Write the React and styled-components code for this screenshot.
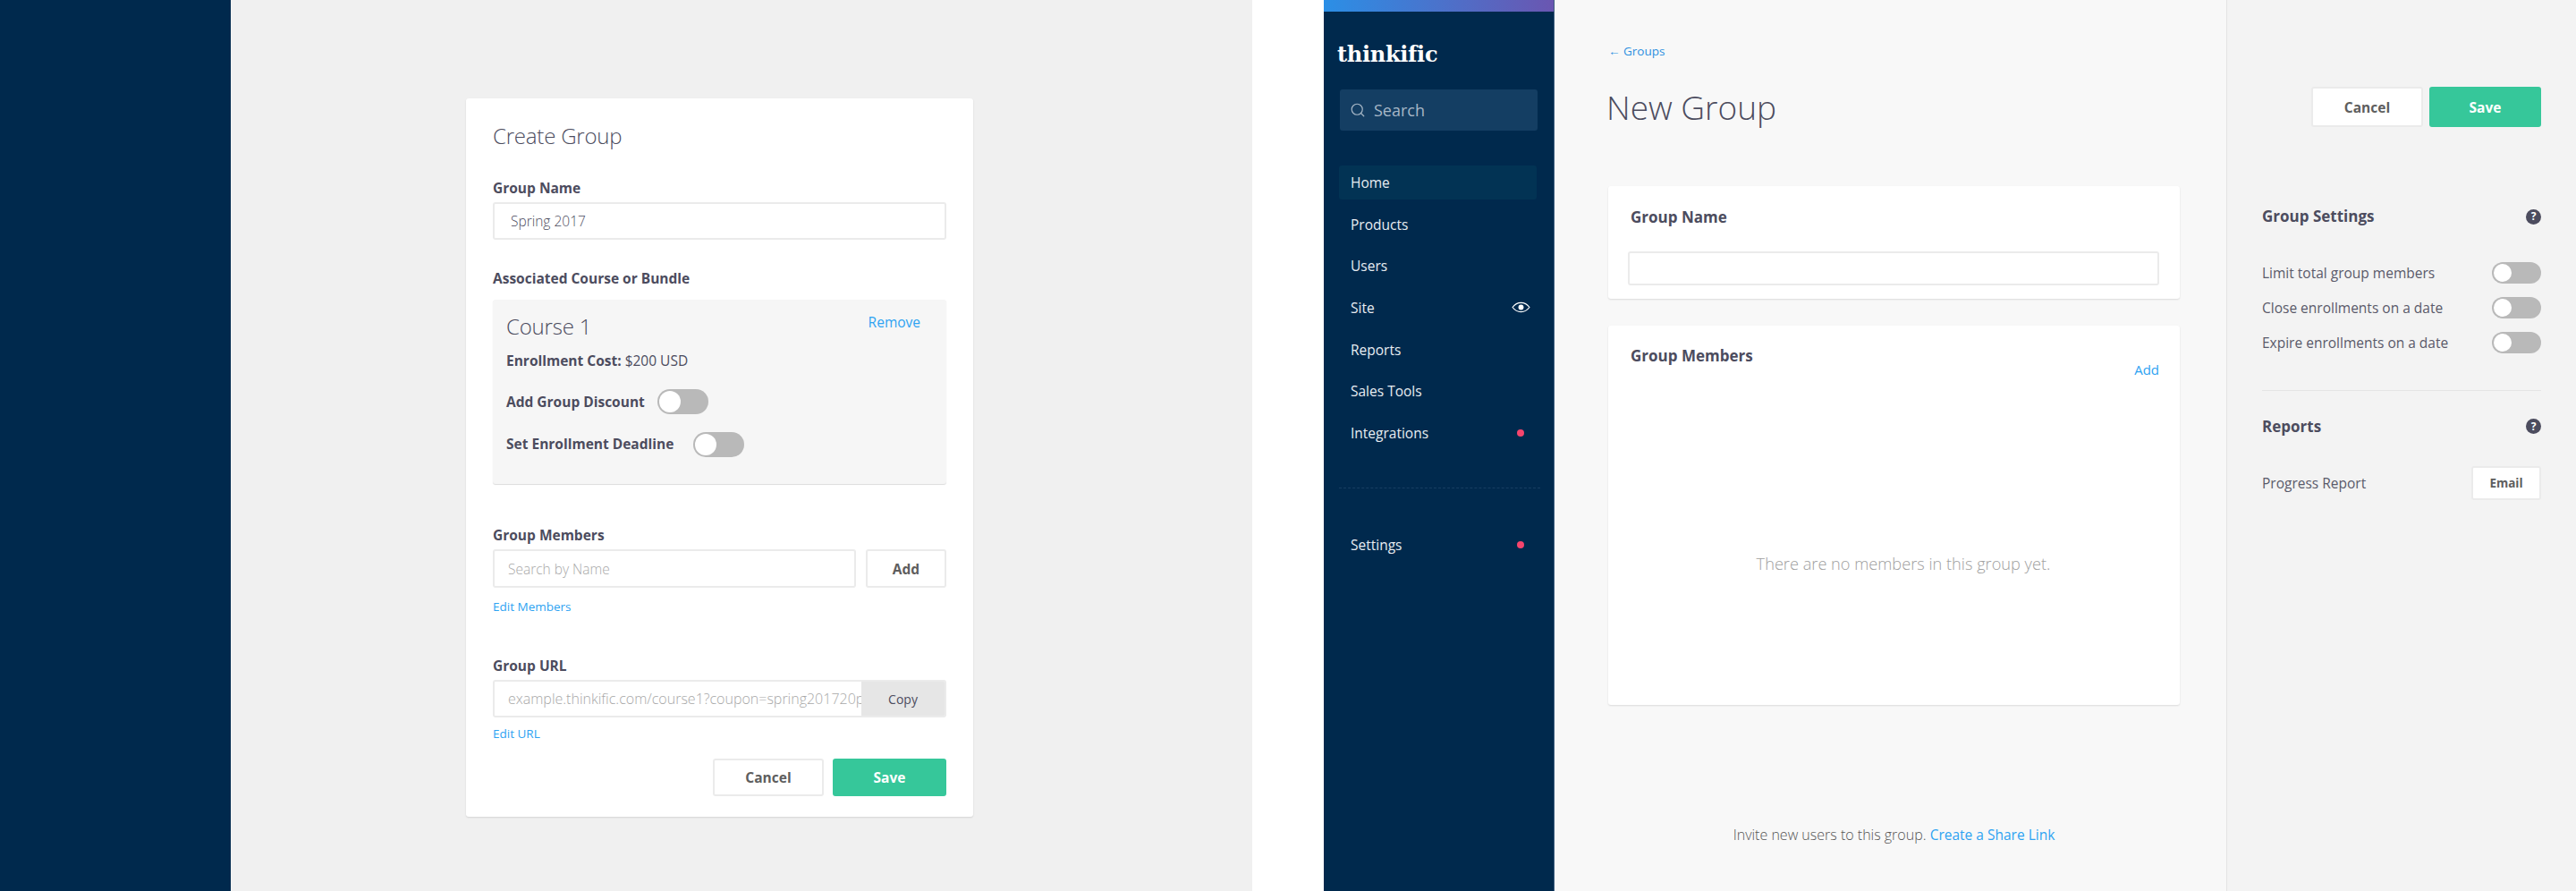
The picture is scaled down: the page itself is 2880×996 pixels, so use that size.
import styled, { createGlobalStyle } from "styled-components";
import { Search } from "lucide-react";

const GlobalStyle = createGlobalStyle`
  html, body {
    margin: 0;
    padding: 0;
    background: #ffffff;
    font-family: "Open Sans", "Liberation Sans", sans-serif;
    color: #4c4c5e;
  }
  * { box-sizing: border-box; }
`;

const navItems = [
  { label: "Home", active: true },
  { label: "Products" },
  { label: "Users" },
  { label: "Site", eye: true },
  { label: "Reports" },
  { label: "Sales Tools" },
  { label: "Integrations", dot: true },
];

const settings = [
  "Limit total group members",
  "Close enrollments on a date",
  "Expire enrollments on a date",
];

export default function App() {
  return (
    <>
      <GlobalStyle />
      <Page>
        <Modal>
          <NavyStrip />
          <ModalStage>
            <Card>
              <CardTitle>Create Group</CardTitle>
              <Label $mt={32}>Group Name</Label>
              <Field $mt={6} $h={42}>
                <FieldText>Spring 2017</FieldText>
              </Field>
              <Label $mt={33}>Associated Course or Bundle</Label>
              <CourseBox>
                <CourseHead>
                  <CourseName>Course 1</CourseName>
                  <RemoveLink>Remove</RemoveLink>
                </CourseHead>
                <Cost>
                  <b>Enrollment Cost:</b> $200 USD
                </Cost>
                <OptionRow $mt={22} $gap={14}>
                  <OptionLabel>Add Group Discount</OptionLabel>
                  <Toggle $w={57} $h={28} />
                </OptionRow>
                <OptionRow $mt={20} $gap={22}>
                  <OptionLabel $lift={3}>Set Enrollment Deadline</OptionLabel>
                  <Toggle $w={57} $h={28} />
                </OptionRow>
              </CourseBox>
              <Label $mt={47}>Group Members</Label>
              <AddRow>
                <Field $h={43} $grow>
                  <FieldText $muted>Search by Name</FieldText>
                </Field>
                <AddButton>Add</AddButton>
              </AddRow>
              <SmallLink $mt={12}>Edit Members</SmallLink>
              <Label $mt={47}>Group URL</Label>
              <Field $mt={6} $h={42}>
                <UrlText>example.thinkific.com/course1?coupon=spring201720p</UrlText>
                <CopyButton>Copy</CopyButton>
              </Field>
              <SmallLink $mt={9}>Edit URL</SmallLink>
              <CardActions>
                <Button $w={124} $h={42}>Cancel</Button>
                <Button $w={127} $h={42} $primary>Save</Button>
              </CardActions>
            </Card>
          </ModalStage>
        </Modal>

        <Gutter />

        <Sidebar>
          <GradientBar />
          <Logo>thinkific</Logo>
          <SearchBox>
            <Search size={18} strokeWidth={1.6} color="#a6b6c6" />
            <span>Search</span>
          </SearchBox>
          <Nav>
            {navItems.map((item) => (
              <NavItem key={item.label} $active={item.active}>
                <span>{item.label}</span>
                {item.eye && <EyeIcon />}
                {item.dot && <Dot />}
              </NavItem>
            ))}
          </Nav>
          <NavDivider />
          <NavItem>
            <span>Settings</span>
            <Dot />
          </NavItem>
        </Sidebar>

        <Main>
          <BackLink>← Groups</BackLink>
          <PageTitle>New Group</PageTitle>
          <Panel $mt={63}>
            <PanelLabel>Group Name</PanelLabel>
            <Field $mt={26} $h={38} />
          </Panel>
          <MembersPanel>
            <MembersHead>
              <PanelLabel>Group Members</PanelLabel>
              <AddLink>Add</AddLink>
            </MembersHead>
            <EmptyText>There are no members in this group yet.</EmptyText>
          </MembersPanel>
          <Invite>
            Invite new users to this group. <a>Create a Share Link</a>
          </Invite>
        </Main>

        <Aside>
          <AsideActions>
            <Button $w={125} $h={45}>Cancel</Button>
            <Button $w={125} $h={45} $primary>Save</Button>
          </AsideActions>
          <AsideHead $mt={88}>
            Group Settings
            <Help>?</Help>
          </AsideHead>
          <SettingList>
            {settings.map((s) => (
              <SettingRow key={s}>
                {s}
                <Toggle $w={55} $h={24} />
              </SettingRow>
            ))}
          </SettingList>
          <AsideDivider />
          <AsideHead $mt={28}>
            Reports
            <Help>?</Help>
          </AsideHead>
          <ReportRow>
            Progress Report
            <EmailButton>Email</EmailButton>
          </ReportRow>
        </Aside>
      </Page>
    </>
  );
}

function EyeIcon() {
  return (
    <EyeSvg viewBox="0 0 20 12" width="21" height="13">
      <path
        d="M1 6c2.400-3.200 5.400-4.900 9-4.900s6.600 1.700 9 4.900c-2.400 3.200-5.400 4.900-9 4.900S3.400 9.200 1 6z"
        fill="none"
        stroke="#ffffff"
        strokeWidth="1.100"
      />
      <circle cx="10" cy="6" r="2.800" fill="#ffffff" />
    </EyeSvg>
  );
}

const Page = styled.div`
  display: flex;
  width: 2880px;
  height: 996px;
  overflow: hidden;
`;

const Modal = styled.section`
  display: flex;
  width: 1400px;
  flex-shrink: 0;
`;

const NavyStrip = styled.div`
  width: 258px;
  background: #00294d;
`;

const ModalStage = styled.div`
  flex: 1;
  background: #f0f0f0;
  padding: 110px 0 0 263px;
`;

const Card = styled.div`
  width: 567px;
  height: 803px;
  padding: 26px 30px 0;
  background: #ffffff;
  border-radius: 3px;
  box-shadow: 0 1px 2px rgba(0, 0, 0, 0.12);
`;

const CardTitle = styled.h2`
  margin: 0;
  font-size: 24px;
  line-height: 32px;
  font-weight: 300;
  letter-spacing: -0.200px;
  color: #4c4c5e;
`;

const Label = styled.div`
  margin-top: ${(p) => p.$mt}px;
  font-size: 15.500px;
  line-height: 20px;
  font-weight: 700;
  color: #4c4c5e;
`;

const Field = styled.div`
  display: flex;
  align-items: center;
  overflow: hidden;
  margin-top: ${(p) => p.$mt || 0}px;
  height: ${(p) => p.$h}px;
  flex: ${(p) => (p.$grow ? 1 : "none")};
  background: #ffffff;
  border: 2px solid #ebebeb;
  border-radius: 3px;
`;

const FieldText = styled.span`
  padding-left: ${(p) => (p.$muted ? 15 : 18)}px;
  font-size: 15.500px;
  font-weight: 300;
  color: ${(p) => (p.$muted ? "#a8a8a8" : "#4c4c5e")};
`;

const UrlText = styled.span`
  flex: 1;
  min-width: 0;
  overflow: hidden;
  white-space: nowrap;
  padding-left: 15px;
  font-size: 16px;
  font-weight: 300;
  color: #a8a8a8;
`;

const CopyButton = styled.div`
  display: flex;
  align-items: center;
  justify-content: center;
  width: 93px;
  height: 100%;
  flex-shrink: 0;
  background: #e6e6e6;
  font-size: 14px;
  color: #4c4c5e;
`;

const CourseBox = styled.div`
  margin-top: 14px;
  height: 206px;
  padding: 15px 29px 0 15px;
  background: #f6f6f6;
  border-radius: 3px;
  box-shadow: 0 1px 1px rgba(0, 0, 0, 0.14);
`;

const CourseHead = styled.div`
  display: flex;
  justify-content: space-between;
  align-items: flex-start;
`;

const CourseName = styled.div`
  font-size: 24px;
  line-height: 30px;
  font-weight: 300;
  letter-spacing: -0.200px;
  color: #4c4c5e;
`;

const RemoveLink = styled.a`
  font-size: 15.500px;
  line-height: 20px;
  font-weight: 400;
  color: #2ea3f2;
`;

const Cost = styled.div`
  margin-top: 13px;
  font-size: 15.500px;
  line-height: 20px;
  font-weight: 400;
  color: #4c4c5e;
`;

const OptionRow = styled.div`
  display: flex;
  align-items: center;
  gap: ${(p) => p.$gap}px;
  margin-top: ${(p) => p.$mt}px;
`;

const OptionLabel = styled.span`
  padding-bottom: ${(p) => p.$lift || 0}px;
  font-size: 15.500px;
  font-weight: 700;
  color: #4c4c5e;
`;

const Toggle = styled.div`
  display: flex;
  align-items: center;
  flex-shrink: 0;
  width: ${(p) => p.$w}px;
  height: ${(p) => p.$h}px;
  padding: 0 3px;
  background: #b9b9b9;
  border-radius: 14px;
  &::before {
    content: "";
    width: ${(p) => p.$h - 4}px;
    height: ${(p) => p.$h - 4}px;
    margin-left: -1px;
    background: #ffffff;
    border-radius: 50%;
  }
`;

const AddRow = styled.div`
  display: flex;
  gap: 11px;
  margin-top: 6px;
`;

const AddButton = styled.div`
  display: flex;
  align-items: center;
  justify-content: center;
  width: 90px;
  height: 43px;
  background: #ffffff;
  border: 2px solid #ebebeb;
  border-radius: 3px;
  font-size: 15.500px;
  font-weight: 700;
  color: #5e5e5e;
`;

const SmallLink = styled.a`
  display: block;
  margin-top: ${(p) => p.$mt}px;
  font-size: 13.500px;
  line-height: 18px;
  font-weight: 400;
  color: #2ea3f2;
`;

const CardActions = styled.div`
  display: flex;
  justify-content: flex-end;
  gap: 10px;
  margin-top: 19px;
`;

const Button = styled.div`
  display: flex;
  align-items: center;
  justify-content: center;
  width: ${(p) => p.$w}px;
  height: ${(p) => p.$h}px;
  background: ${(p) => (p.$primary ? "#36c79a" : "#ffffff")};
  border: 2px solid ${(p) => (p.$primary ? "#36c79a" : "#ebebeb")};
  border-radius: 3px;
  font-size: 15.500px;
  font-weight: 700;
  color: ${(p) => (p.$primary ? "#ffffff" : "#5e5e5e")};
`;

const Gutter = styled.div`
  width: 80px;
  flex-shrink: 0;
  background: #ffffff;
`;

const Sidebar = styled.nav`
  display: flex;
  flex-direction: column;
  width: 258px;
  flex-shrink: 0;
  background: #00294d;
  border-right: 1px solid #3f5f80;
`;

const GradientBar = styled.div`
  height: 13px;
  background: linear-gradient(90deg, #2b8fe6, #6a56b1);
`;

const Logo = styled.div`
  margin: 33px 0 0 15px;
  font-family: "DejaVu Serif", "Liberation Serif", serif;
  font-size: 24px;
  line-height: 30px;
  font-weight: 700;
  letter-spacing: -0.300px;
  color: #ffffff;
`;

const SearchBox = styled.div`
  display: flex;
  align-items: center;
  gap: 9px;
  width: 221px;
  height: 46px;
  margin: 24px 0 0 18px;
  padding-left: 11px;
  background: #143e63;
  border-radius: 3px;
  font-size: 18px;
  color: #a6b6c6;
`;

const Nav = styled.div`
  display: flex;
  flex-direction: column;
  margin-top: 39px;
`;

const NavItem = styled.div`
  display: flex;
  align-items: center;
  justify-content: space-between;
  width: 221px;
  height: 38px;
  margin: 0 0 8.670px 17px;
  padding: 0 9px 0 13px;
  background: ${(p) => (p.$active ? "#023354" : "transparent")};
  border-radius: 3px;
  font-size: 15.500px;
  color: #e8edf2;
`;

const EyeSvg = styled.svg`
  margin-right: -2px;
`;

const Dot = styled.span`
  width: 8px;
  height: 8px;
  margin-right: 5px;
  border-radius: 50%;
  background: #f5456d;
`;

const NavDivider = styled.div`
  width: 225px;
  margin: 33px 0 44px 17px;
  border-top: 1px dashed #173e62;
`;

const Main = styled.main`
  display: flex;
  flex-direction: column;
  width: 751px;
  flex-shrink: 0;
  padding: 48px 52px 52px 60px;
  background: #f8f8f8;
`;

const BackLink = styled.a`
  font-size: 13.500px;
  line-height: 18px;
  font-weight: 400;
  color: #2e90e0;
`;

const PageTitle = styled.h1`
  margin: 29px 0 0 -2px;
  font-size: 37px;
  line-height: 50px;
  font-weight: 300;
  color: #4c4c5e;
`;

const Panel = styled.div`
  margin-top: ${(p) => p.$mt}px;
  height: 126px;
  padding: 23px 23px 0 22px;
  background: #ffffff;
  border-radius: 3px;
  box-shadow: 0 1px 2px rgba(0, 0, 0, 0.12);
`;

const PanelLabel = styled.div`
  padding-left: 3px;
  font-size: 17px;
  line-height: 24px;
  font-weight: 700;
  color: #4c4c5e;
`;

const MembersPanel = styled(Panel)`
  display: flex;
  flex-direction: column;
  margin-top: 30px;
  height: 424px;
  padding-top: 22px;
`;

const MembersHead = styled.div`
  display: flex;
  justify-content: space-between;
  align-items: flex-start;
`;

const AddLink = styled.a`
  margin-top: 16px;
  font-size: 15px;
  line-height: 22px;
  font-weight: 400;
  color: #2ea3f2;
`;

const EmptyText = styled.div`
  display: flex;
  flex: 1;
  align-items: center;
  justify-content: center;
  padding: 48px 0 0 22px;
  font-size: 18.200px;
  font-weight: 300;
  color: #a0a0a0;
`;

const Invite = styled.div`
  margin-top: auto;
  text-align: center;
  font-size: 16px;
  line-height: 22px;
  font-weight: 300;
  color: #555555;
  a {
    font-size: 15.500px;
    font-weight: 400;
    color: #2ea3f2;
  }
`;

const Aside = styled.aside`
  flex: 1;
  padding: 97px 39px 0;
  background: #f3f3f3;
  border-left: 1px solid #e4e4e4;
`;

const AsideActions = styled.div`
  display: flex;
  justify-content: flex-end;
  gap: 7px;
`;

const AsideHead = styled.div`
  display: flex;
  align-items: center;
  justify-content: space-between;
  margin-top: ${(p) => p.$mt}px;
  font-size: 17px;
  line-height: 24px;
  font-weight: 700;
  color: #4c4c5e;
`;

const Help = styled.span`
  display: flex;
  align-items: center;
  justify-content: center;
  width: 17px;
  height: 17px;
  border-radius: 50%;
  background: #4c4c5e;
  font-size: 12px;
  font-weight: 700;
  color: #ffffff;
`;

const SettingList = styled.div`
  margin-top: 32px;
`;

const SettingRow = styled.div`
  display: flex;
  align-items: center;
  justify-content: space-between;
  height: 38.670px;
  font-size: 15.500px;
  color: #5a5a6a;
`;

const AsideDivider = styled.div`
  margin-top: 34px;
  border-top: 1px solid #e4e4e4;
`;

const ReportRow = styled.div`
  display: flex;
  align-items: center;
  justify-content: space-between;
  margin-top: 32px;
  font-size: 15.500px;
  color: #5a5a6a;
`;

const EmailButton = styled.div`
  display: flex;
  align-items: center;
  justify-content: center;
  width: 78px;
  height: 38px;
  background: #ffffff;
  border: 2px solid #ebebeb;
  border-radius: 3px;
  font-size: 13.500px;
  font-weight: 700;
  color: #5e5e5e;
`;
